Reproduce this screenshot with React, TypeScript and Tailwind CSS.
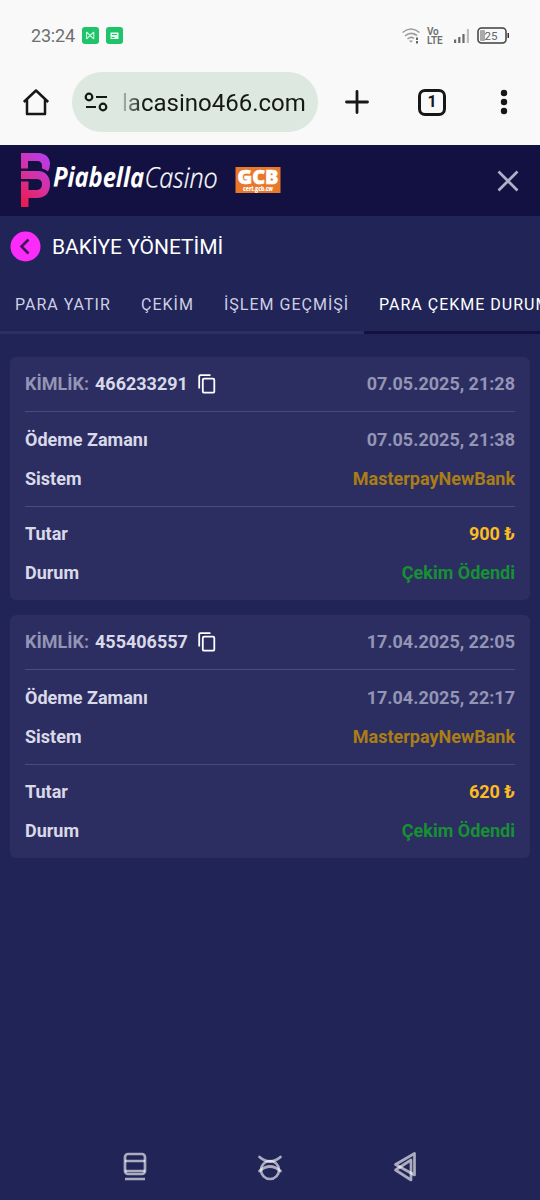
import React from "react";

function StatusBar() {
  return (
    <div className="flex h-[72px] items-center px-[31px] pr-[30px] text-[#6d6f70]">
      <span className="text-[18px] leading-none tracking-[-0.2px]">23:24</span>
      <svg className="-mt-[2px] ml-[7px]" width="41" height="17" viewBox="0 0 41 17" fill="none">
        <rect width="17" height="17" rx="3" fill="#1fc368" />
        <path d="M4.500 5v7M11.800 5v7M4.500 5l3.600 3.500L11.800 5M4.500 12L8.100 8.500l3.700 3.500" stroke="#c9f6dc" strokeWidth="1.100" />
        <rect x="24" width="17" height="17" rx="3" fill="#1fc368" />
        <path d="M28.500 5.500h8v6.500h-8z" fill="#eafff2" />
        <path d="M30 7.500h5M29.500 10.500h3" stroke="#1fc368" strokeWidth="1.100" />
      </svg>
      <svg className="ml-auto" width="18" height="17" viewBox="0 0 18 17" fill="none" stroke="#9b9d9e" strokeWidth="1.600">
        <path d="M.5 4.500Q9-2.500 17.500 4.500M3 7.800Q9 3 15 7.500M5.500 11Q9 8 12 10.500" />
        <path d="M7 12.500h4l-2 2.200z" fill="#9b9d9e" stroke="none" />
        <path d="M15 9.500v2.500M15 13v2.500" stroke="#666" strokeWidth="2" />
      </svg>
      <div className="ml-[7px] w-[16px] text-[10px] leading-[9px] font-semibold tracking-[-0.2px]">
        <div>Vo</div>
        <div>LTE</div>
      </div>
      <svg className="ml-[10px]" width="17" height="16" viewBox="0 0 17 16">
        <path d="M1 11.500h2.200v3.500H1zM5.200 9h2.200v6H5.200zM9.400 6h2.200v9H9.400z" fill="#66686a" />
        <path d="M13.800 1h2.200v14h-2.200z" fill="#bbbdbe" />
      </svg>
      <svg className="-mt-[2px] ml-[7px]" width="33" height="17" viewBox="0 0 33 17">
        <rect x="1" y="1" width="28" height="15" rx="3.500" fill="none" stroke="#3c3e40" strokeWidth="1.500" />
        <rect x="3" y="3" width="5" height="11" rx="1" fill="#aaa" />
        <path d="M30.500 6h1.500v5h-1.500z" fill="#333" />
        <text x="7.500" y="12.500" fontSize="11.500" fill="#626466">25</text>
      </svg>
    </div>
  );
}

function BrowserBar() {
  return (
    <div className="flex h-[60px] items-center pl-[22px] text-[#151816]">
      <svg width="28" height="30" viewBox="0 0 28 30" fill="none" stroke="currentColor" strokeWidth="2.500" strokeLinejoin="round">
        <path d="M1.800 15 14 3.500 26.200 15M5 12.500v14.500h18V12.500" />
      </svg>
      <div className="ml-[22px] flex h-[60px] w-[246px] items-center rounded-full bg-[#dce8e0] pl-[12px]">
        <svg width="24" height="20" viewBox="0 0 24 20" fill="none" stroke="currentColor" strokeWidth="2.200">
          <circle cx="5" cy="5" r="3.300" />
          <path d="M12 5h11M2 15h10" />
          <circle cx="19" cy="15" r="3.300" />
        </svg>
        <span className="mt-[2px] ml-[14px] bg-linear-to-r from-[#b4beb8] from-0% via-[#151816] via-12% to-[#151816] bg-clip-text text-[24px] leading-[32px] whitespace-nowrap text-transparent">
          lacasino466.com
        </span>
      </div>
      <svg className="ml-[27px]" width="24" height="24" viewBox="0 0 24 24" stroke="currentColor" strokeWidth="2.800" strokeLinecap="round">
        <path d="M1.500 12h21M12 1.500v21" />
      </svg>
      <div className="ml-[49px] flex h-[27px] w-[28px] items-center justify-center rounded-[7px] border-[3px] border-[#151816] text-[16px] leading-none font-bold">
        1
      </div>
      <svg className="ml-[54px]" width="8" height="26" viewBox="0 0 8 26" fill="currentColor">
        <circle cx="4" cy="4" r="3.200" />
        <circle cx="4" cy="13" r="3.200" />
        <circle cx="4" cy="22" r="3.200" />
      </svg>
    </div>
  );
}

function BrandHeader() {
  return (
    <header className="flex h-[71px] items-center bg-[#121142] pr-[21px] pl-[20px]">
      <svg width="262" height="71" viewBox="20 145 262 71">
        <defs>
          <linearGradient id="mark" x1="0.700" y1="0" x2="0.200" y2="1">
            <stop offset="0" stopColor="#b83be8" />
            <stop offset="0.500" stopColor="#d8309f" />
            <stop offset="1" stopColor="#e81c50" />
          </linearGradient>
        </defs>
        <path
          d="M21 153H38C46 153 50 158 50 164Q50 168 48 171.500Q46 169.500 42 168.500V166Q42 161 37 161H28V168.500H21ZM21 171H38C46 171 50 177 50 184C50 193 45 198 37 198H28.500V207H21V181.500H28.500V190H36Q42 190 42 184Q42 179 36 179H21Z"
          fill="url(#mark)"
        />
        <g fill="#fff" fontFamily="Open Sans, sans-serif" fontStyle="italic" transform="rotate(0.500 53 187)">
          <text x="53" y="186.500" fontSize="27.500" fontWeight="700" textLength="91" lengthAdjust="spacingAndGlyphs">Piabella</text>
          <text x="144.500" y="186.500" fontSize="28" fontWeight="300" stroke="#fff" strokeWidth="0.300" textLength="73" lengthAdjust="spacingAndGlyphs">Casino</text>
        </g>
        <rect x="235.500" y="167" width="45" height="26" fill="#e8792b" />
        <g fill="#fff" fontFamily="Open Sans, sans-serif" fontWeight="800">
          <text x="237.500" y="183.500" fontSize="20" stroke="#fff" strokeWidth="0.600" textLength="41" lengthAdjust="spacingAndGlyphs">GCB</text>
          <text x="243" y="190.500" fontSize="6" textLength="30" lengthAdjust="spacingAndGlyphs">cert.gcb.cw</text>
        </g>
      </svg>
      <svg className="ml-auto" width="22" height="22" viewBox="0 0 22 22" stroke="#b0b0c8" strokeWidth="2.700">
        <path d="M1.500 1.500l19 19M20.500 1.500l-19 19" />
      </svg>
    </header>
  );
}

function Tabs() {
  return (
    <nav className="flex h-[58px] w-full overflow-hidden text-[16px] whitespace-nowrap text-[#cfcfe4]">
      <div className="flex w-[126px] shrink-0 items-center border-b-[3px] border-[#2d2e63] pt-[2px] pl-[15px] tracking-[1px]">PARA YATIR</div>
      <div className="flex w-[83px] shrink-0 items-center border-b-[3px] border-[#2d2e63] pt-[2px] pl-[15px] tracking-[1px]">ÇEKİM</div>
      <div className="flex w-[155px] shrink-0 items-center border-b-[3px] border-[#2d2e63] pt-[2px] pl-[15px] tracking-[1px]">İŞLEM GEÇMİŞİ</div>
      <div className="flex w-[210px] shrink-0 items-center border-b-[3px] border-[#121142] pt-[2px] pl-[15px] tracking-[1px] text-white">PARA ÇEKME DURUMU</div>
    </nav>
  );
}

type Withdrawal = { id: string; created: string; paid: string; amount: string };

const withdrawals: Withdrawal[] = [
  { id: "466233291", created: "07.05.2025, 21:28", paid: "07.05.2025, 21:38", amount: "900 ₺" },
  { id: "455406557", created: "17.04.2025, 22:05", paid: "17.04.2025, 22:17", amount: "620 ₺" },
];

function Row({ label, value, color }: { label: string; value: string; color: string }) {
  return (
    <div className="flex h-[39px] items-center justify-between">
      <span>{label}</span>
      <span className={color}>{value}</span>
    </div>
  );
}

function Card({ item }: { item: Withdrawal }) {
  return (
    <section className="h-[243px] rounded-[6px] bg-[#2c2e62] px-[15px] text-[18px] font-bold text-[#d9d9e8]">
      <div className="flex h-[55px] items-center border-b border-[#494b7d] pb-[2px]">
        <span className="mr-[6px] text-[#9495b4]">KİMLİK:</span>
        <span>{item.id}</span>
        <svg className="mt-[1px] ml-[10px]" width="18" height="20" viewBox="0 0 18 20" fill="none" stroke="#fff" strokeWidth="1.800">
          <path d="M1.200 14.500V2.500Q1.200 1.200 2.500 1.200H12.500" />
          <rect x="4.800" y="4.700" width="11.500" height="14" rx="1.300" />
        </svg>
        <span className="ml-auto text-[#9495b4]">{item.created}</span>
      </div>
      <div className="h-[95px] border-b border-[#494b7d] pt-[8px]">
        <Row label="Ödeme Zamanı" value={item.paid} color="text-[#9495b4]" />
        <Row label="Sistem" value="MasterpayNewBank" color="text-[#aa7d15]" />
      </div>
      <div className="pt-[7px]">
        <Row label="Tutar" value={item.amount} color="text-[#fcbb20]" />
        <Row label="Durum" value="Çekim Ödendi" color="text-[#169132]" />
      </div>
    </section>
  );
}

function SystemNavigation() {
  return (
    <footer className="mt-auto flex h-[67px] items-center justify-between px-[121px]">
      <svg width="28" height="32" viewBox="0 0 28 32" fill="none" stroke="#fff" strokeOpacity="0.620" strokeWidth="2.700">
        <rect x="4" y="3" width="20" height="20" rx="3" />
        <path d="M4 10h20M4 20h20M4 28h20" />
      </svg>
      <svg width="28" height="32" viewBox="0 0 28 32" fill="none" stroke="#fff" strokeLinecap="round" strokeWidth="2.700">
        <path d="M3.500 6Q14 15 24.500 6" strokeOpacity="0.620" />
        <circle cx="14" cy="19" r="9" strokeOpacity="0.620" />
        <path d="M3.500 20Q14 11 24.500 20" strokeOpacity="0.620" />
      </svg>
      <svg width="28" height="32" viewBox="0 0 28 32" fill="none" stroke="#fff" strokeOpacity="0.620" strokeWidth="2.700" strokeLinejoin="round">
        <path d="M23.500 2.500V24L4.500 13.500Z" />
        <path d="M20 9V29L4.500 19Z" />
      </svg>
    </footer>
  );
}

export default function App() {
  return (
    <main className="flex h-[1200px] w-[540px] flex-col overflow-hidden bg-[#212457] font-['Roboto',sans-serif]">
      <div className="h-[145px] shrink-0 bg-[#f9f9f9]">
        <StatusBar />
        <BrowserBar />
      </div>
      <BrandHeader />
      <div className="flex h-[60px] items-center bg-[#212457] pl-[10px]">
        <svg width="31" height="31" viewBox="0 0 31 31" fill="none">
          <circle cx="15.500" cy="15.500" r="15" fill="#fb2bfa" />
          <path d="M18.500 8.500l-7 7 7 7" stroke="#391754" strokeWidth="2.500" />
        </svg>
        <h1 className="mt-[2px] ml-[11px] text-[21px] leading-none text-white">BAKİYE YÖNETİMİ</h1>
      </div>
      <Tabs />
      <div className="flex flex-col gap-[15px] px-[10px] pt-[23px]">
        {withdrawals.map((item) => (
          <Card key={item.id} item={item} />
        ))}
      </div>
      <SystemNavigation />
    </main>
  );
}
